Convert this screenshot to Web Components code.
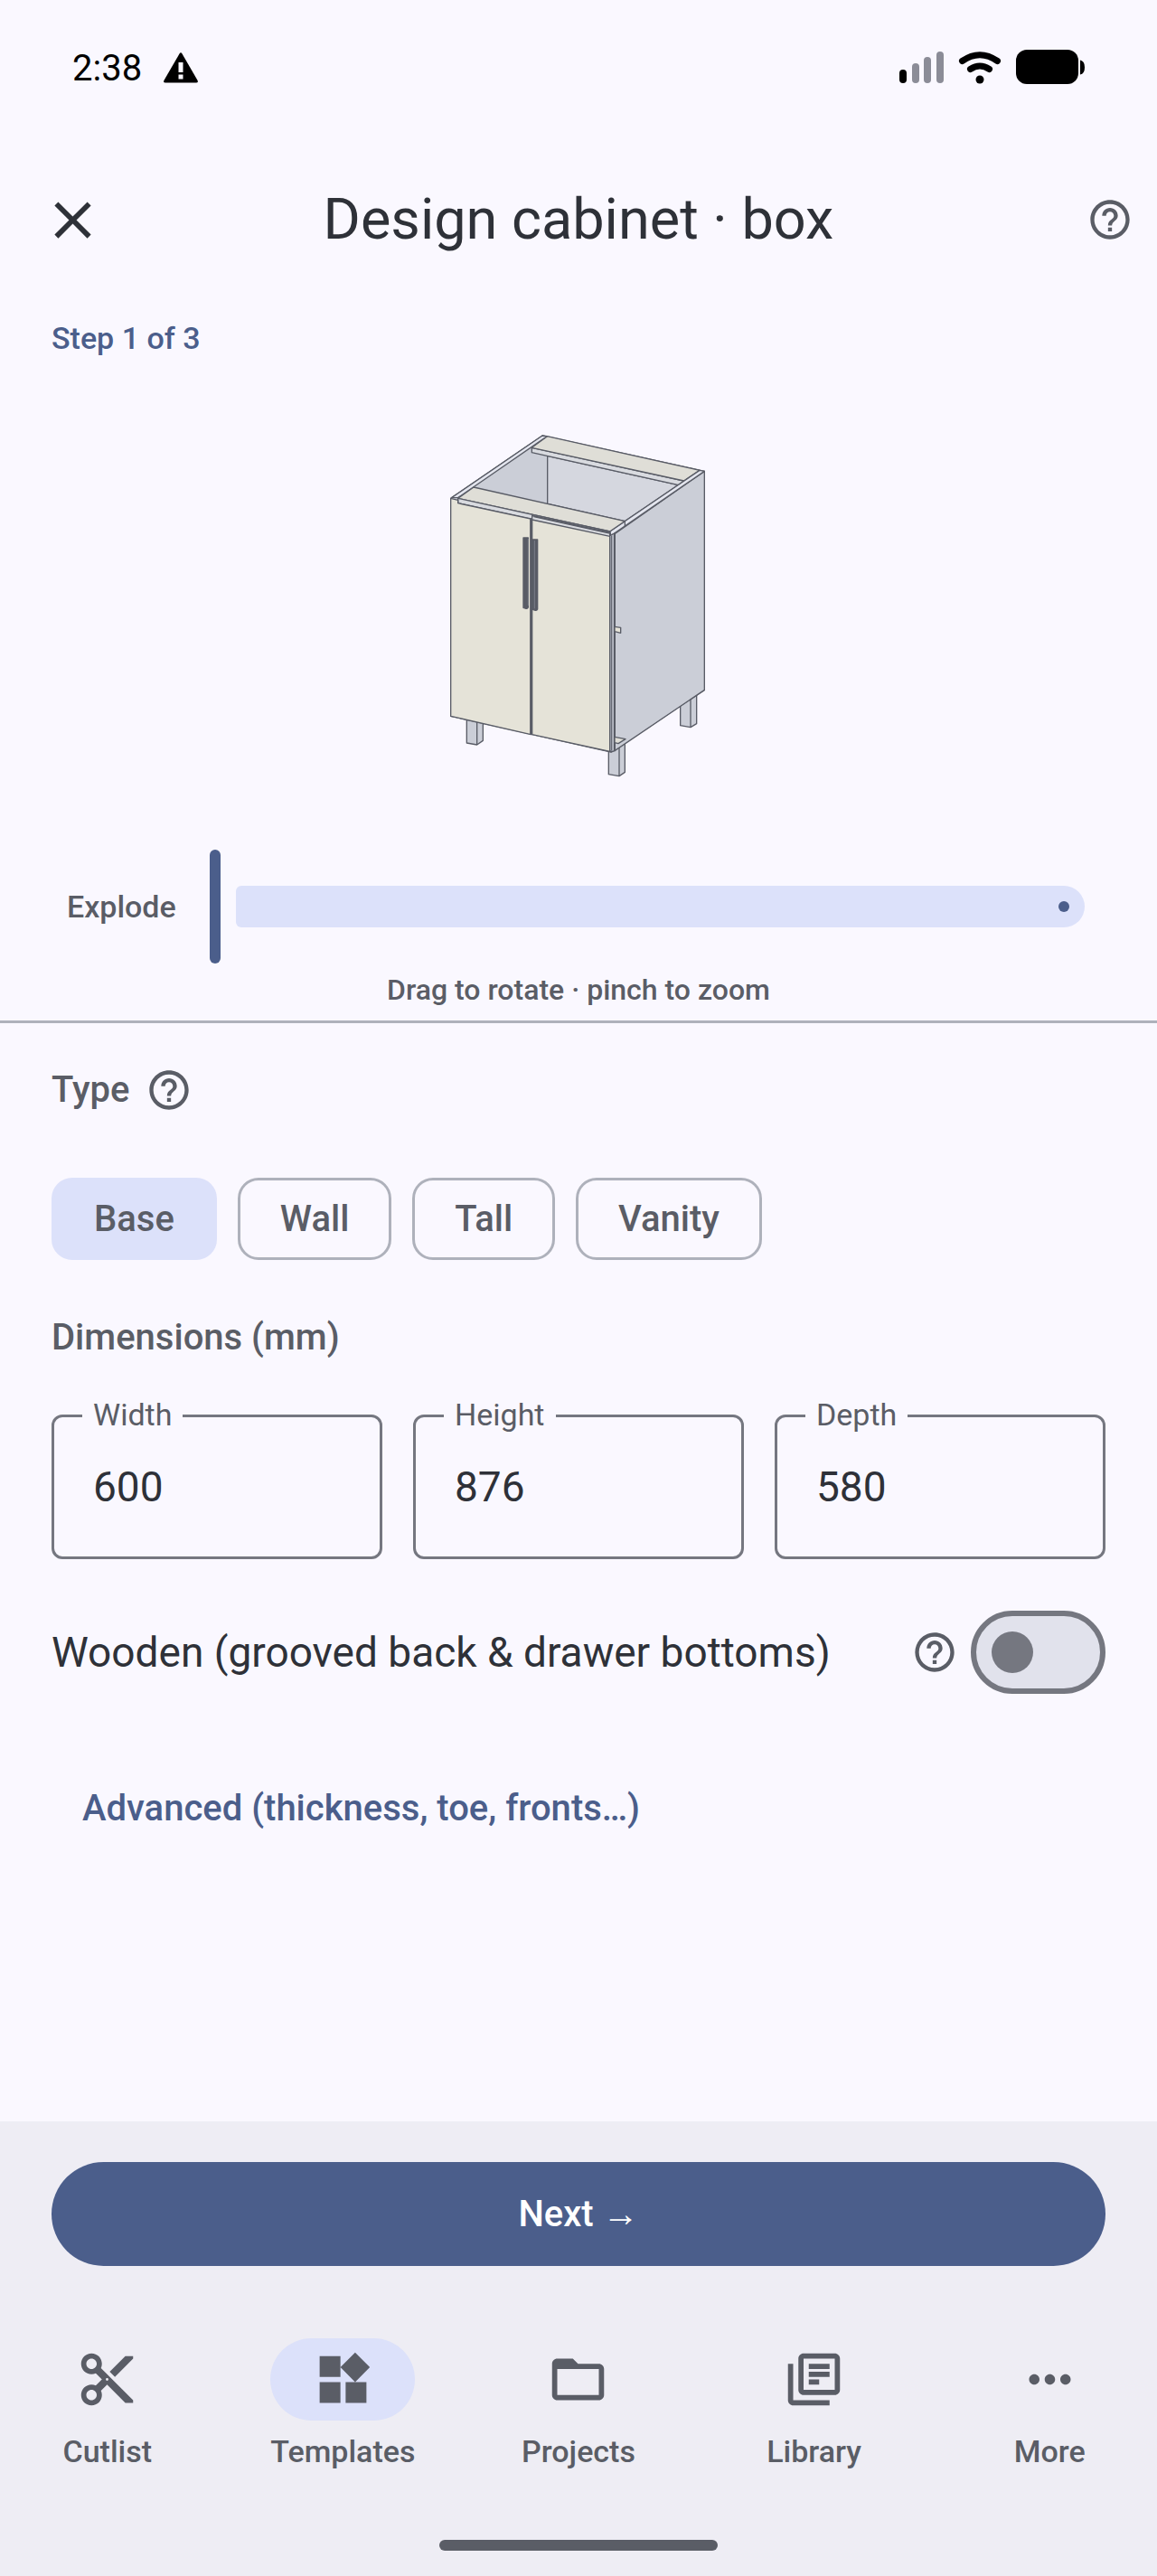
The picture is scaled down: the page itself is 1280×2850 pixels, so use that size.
<!DOCTYPE html>
<html lang="en">
<head>
<meta charset="UTF-8">
<meta name="viewport" content="width=device-width, initial-scale=1">
<title>Design cabinet</title>
<style>
    :root {
        --surface: #faf8ff;
        --surface-bar: #eeedf4;
        --primary: #4b5e8b;
        --selected: #dce1fa;
        --text: #2e3138;
        --text-soft: #5a5d66;
        --outline: #757780;
        --outline-soft: #aeb1bb;
    }
    body {
        margin: 0;
        background: var(--surface);
        color: var(--text);
        font-family: Roboto, "Liberation Sans", sans-serif;
    }
</style>
</head>
<body>
<cabinet-app></cabinet-app>

<script>
const ICONS = {
    close: '<path d="M19 6.41L17.59 5 12 10.59 6.41 5 5 6.41 10.59 12 5 17.59 6.41 19 12 13.41 17.59 19 19 17.59 13.41 12z"/>',
    help: '<path d="M11 18h2v-2h-2v2zm1-16C6.48 2 2 6.48 2 12s4.48 10 10 10 10-4.48 10-10S17.52 2 12 2zm0 18c-4.41 0-8-3.59-8-8s3.59-8 8-8 8 3.59 8 8-3.59 8-8 8zm0-14c-2.21 0-4 1.79-4 4h2c0-1.1.9-2 2-2s2 .9 2 2c0 2-3 1.75-3 5h2c0-2.25 3-2.5 3-5 0-2.21-1.79-4-4-4z"/>',
    cut: '<path d="M9.64 7.64c.23-.5.36-1.05.36-1.64 0-2.21-1.79-4-4-4S2 3.79 2 6s1.79 4 4 4c.59 0 1.14-.13 1.64-.36L10 12l-2.36 2.36C7.14 14.13 6.59 14 6 14c-2.21 0-4 1.79-4 4s1.79 4 4 4 4-1.79 4-4c0-.59-.13-1.14-.36-1.64L12 14l7 7h3v-1L9.64 7.64zM6 8c-1.1 0-2-.89-2-2s.9-2 2-2 2 .89 2 2-.9 2-2 2zm0 12c-1.1 0-2-.89-2-2s.9-2 2-2 2 .89 2 2-.9 2-2 2zm6-7.5c-.28 0-.5-.22-.5-.5s.22-.5.5-.5.5.22.5.5-.22.5-.5.5zM19 3l-6 6 2 2 7-7V3z"/>',
    widgets: '<path d="M13 13v8h8v-8h-8zM3 21h8v-8H3v8zM3 3v8h8V3H3zm13.66-1.31L11 7.34 16.66 13l5.66-5.66-5.66-5.65z"/>',
    folder: '<path d="M20 6h-8l-2-2H4c-1.1 0-1.99.9-1.99 2L2 18c0 1.1.9 2 2 2h16c1.1 0 2-.9 2-2V8c0-1.1-.9-2-2-2zm0 12H4V8h16v10z"/>',
    library: '<path d="M4 6H2v14c0 1.1.9 2 2 2h14v-2H4V6zm16-4H8c-1.1 0-2 .9-2 2v12c0 1.1.9 2 2 2h12c1.1 0 2-.9 2-2V4c0-1.1-.9-2-2-2zm0 14H8V4h12v12zM10 9h8v2h-8zm0 3h4v2h-4zm0-6h8v2h-8z"/>',
    more: '<path d="M6 10c-1.1 0-2 .9-2 2s.9 2 2 2 2-.9 2-2-.9-2-2-2zm12 0c-1.1 0-2 .9-2 2s.9 2 2 2 2-.9 2-2-.9-2-2-2zm-6 0c-1.1 0-2 .9-2 2s.9 2 2 2 2-.9 2-2-.9-2-2-2z"/>'
};

class AppIcon extends HTMLElement {
    connectedCallback() {
        this.attachShadow({ mode: 'open' });
        this.shadowRoot.innerHTML = `
            <style>
                :host { display: block; width: 69px; height: 69px; flex: none; }
                :host([small]) { width: 52px; height: 52px; }
                svg { display: block; width: 100%; height: 100%; fill: currentColor; }
            </style>
            <svg viewBox="0 0 24 24" aria-hidden="true">${ICONS[this.getAttribute('name')]}</svg>
        `;
    }
}
customElements.define('app-icon', AppIcon);

class IconButton extends HTMLElement {
    connectedCallback() {
        this.attachShadow({ mode: 'open' });
        this.shadowRoot.innerHTML = `
            <style>
                :host { display: block; flex: none; color: var(--text-soft); }
                :host([name="close"]) { color: var(--text); }
                button { display: block; padding: 0; border: 0; background: none; color: inherit; }
            </style>
            <button type="button" aria-label="${this.getAttribute('label')}">
                <app-icon name="${this.getAttribute('name')}" ${this.hasAttribute('small') ? 'small' : ''}></app-icon>
            </button>
        `;
    }
}
customElements.define('icon-button', IconButton);

class StatusBar extends HTMLElement {
    connectedCallback() {
        this.attachShadow({ mode: 'open' });
        this.shadowRoot.innerHTML = `
            <style>
                :host {
                    display: flex;
                    align-items: center;
                    height: 150px;
                    padding: 0 80px;
                    color: #000;
                    font-size: 40px;
                }
                .warning { width: 38px; height: 34px; margin-left: 24px; }
                .system { width: 206px; height: 40px; margin-left: auto; }
            </style>
            <span>2:38</span>
            <svg class="warning" viewBox="0 0 38 34" aria-hidden="true">
                <path d="M17.5 1.4q1.5-2.2 3 0L37.6 31q.8 2.6-1.6 2.6H2Q-.4 33.6.4 31z"/>
                <path d="M16.5 11h5v11h-5zM16.5 24.5h5v5h-5z" fill="#faf8ff"/>
            </svg>
            <svg class="system" viewBox="0 0 206 40" aria-hidden="true">
                <rect x="1" y="22" width="8" height="15" rx="4"/>
                <g fill="#8b8c97">
                    <rect x="15" y="15" width="8" height="22" rx="4"/>
                    <rect x="28" y="8" width="8" height="29" rx="4"/>
                    <rect x="42" y="2" width="8" height="35" rx="4"/>
                </g>
                <g fill="none" stroke="#000" stroke-width="7" stroke-linecap="round">
                    <path d="M70.5 12.5Q90 -1 109.5 12.5"/>
                    <path d="M79.5 21.5Q90 14.5 100.5 21.5"/>
                </g>
                <circle cx="90" cy="33" r="4.5"/>
                <rect x="130" y="0" width="69" height="38" rx="12"/>
                <path d="M201 11.5q5 1 5 8t-5 8z"/>
            </svg>
        `;
    }
}
customElements.define('status-bar', StatusBar);

class TitleBar extends HTMLElement {
    connectedCallback() {
        this.attachShadow({ mode: 'open' });
        this.shadowRoot.innerHTML = `
            <style>
                :host {
                    display: grid;
                    grid-template-columns: 1fr auto 1fr;
                    align-items: center;
                    height: 186px;
                    padding: 0 26px;
                }
                h1 { margin: 0; font-size: 63px; font-weight: 400; line-height: 80px; }
                .start { padding-left: 20px; }
                .end { justify-self: end; }
            </style>
            <div class="start"><slot name="start"></slot></div>
            <h1><slot></slot></h1>
            <div class="end"><slot name="end"></slot></div>
        `;
    }
}
customElements.define('title-bar', TitleBar);

// Isometric view of the base cabinet with two doors
class CabinetView extends HTMLElement {
    connectedCallback() {
        this.attachShadow({ mode: 'open' });
        this.shadowRoot.innerHTML = `
            <style>
                :host { display: grid; justify-items: center; padding: 63px 0 60px; }
                svg { display: block; width: 320px; height: 420px; }
            </style>
            <svg viewBox="0 0 960 1260" role="img" aria-label="Base cabinet preview" stroke="#595c66" stroke-width="4" stroke-linejoin="round">
                <g fill="#cbced7">
                    <path d="M109 1000V1086L143 1092L163 1078V1000z"/>
                    <path d="M143 1000V1092"/>
                    <path d="M580 1100V1190L615 1196L634 1183V1080z"/>
                    <path d="M615 1090V1196"/>
                    <path d="M818 950V1028L852 1034L872 1022V920z"/>
                    <path d="M852 930V1034"/>
                </g>
                <path d="M360 66L898 184V910L588 1116L56 997V274z" fill="#cbced7"/>
                <path d="M377 133L812 230L634 350L377 292z" fill="#d5d7df"/>
                <path d="M600 392L898 184V910L600 1112z" fill="#cbced7"/>
                <path d="M325 106L830 216L812 230L325 122z" fill="#d9dbe0"/>
                <path d="M376 68L882 181L830 216L325 106z" fill="#dfded7"/>
                <path d="M360 66L376 68L80 272L60 271z" fill="#e4e6ef"/>
                <path d="M882 181L898 184L588 398L584 384z" fill="#e4e6ef"/>
                <path d="M634 350V366" fill="none"/>
                <path d="M132 237L634 350L584 384L80 274z" fill="#dfded7"/>
                <path d="M80 274L584 384V400L80 290z" fill="#d9dbe0"/>
                <path d="M56 274L80 280V290L322 342V1058L56 997z" fill="#e5e3d8"/>
                <path d="M326 332L584 388V1114L326 1058z" fill="#e5e3d8"/>
                <path d="M326 332L584 388V400L326 345z" fill="#d9dbe0"/>
                <path d="M332 334L584 390" fill="none" stroke-width="5"/>
                <path d="M584 398L600 390V1112L588 1116L584 1110z" fill="#b5b8c2"/>
                <path d="M590 398V1112" fill="none" stroke-width="3"/>
                <path d="M600 392V1112" fill="none" stroke-width="6"/>
                <path d="M322 340V1058" fill="none" stroke-width="7"/>
                <path d="M600 700L620 703V721L600 716z" fill="#e5e3d8"/>
                <path d="M600 1066L636 1073L612 1088L600 1085z" fill="#dfded7"/>
                <path d="M297 405H313V636Q311 641 306 640L297 637z" fill="#595c66"/>
                <path d="M328 411H344V642Q342 647 337 646L328 643z" fill="#595c66"/>
                <path d="M313 408V630M334 414V640" fill="none" stroke="#8b8e99" stroke-width="2"/>
            </svg>
        `;
    }
}
customElements.define('cabinet-view', CabinetView);

class ExplodeSlider extends HTMLElement {
    connectedCallback() {
        this.attachShadow({ mode: 'open' });
        this.shadowRoot.innerHTML = `
            <style>
                :host {
                    display: flex;
                    align-items: center;
                    gap: 30px;
                    padding: 0 80px 0 74px;
                }
                label { min-width: 128px; color: var(--text-soft); font-size: 34px; font-weight: 500; line-height: 46px; }
                .slider { display: grid; flex: 1; align-items: center; }
                .slider > * { grid-area: 1 / 1; }
                .track {
                    display: flex;
                    align-items: center;
                    justify-content: flex-end;
                    height: 46px;
                    margin-left: 29px;
                    padding-right: 17px;
                    border-radius: 6px 23px 23px 6px;
                    background: var(--selected);
                }
                .track::after { content: ""; width: 12px; height: 12px; border-radius: 50%; background: var(--primary); }
                input { appearance: none; width: 100%; height: 126px; margin: 0; background: none; }
                input::-webkit-slider-thumb {
                    appearance: none;
                    width: 12px;
                    height: 126px;
                    border-radius: 6px;
                    background: var(--primary);
                }
            </style>
            <label for="explode">Explode</label>
            <div class="slider">
                <div class="track"></div>
                <input id="explode" type="range" min="0" max="100" value="0">
            </div>
        `;
    }
}
customElements.define('explode-slider', ExplodeSlider);

class FilterChip extends HTMLElement {
    connectedCallback() {
        this.attachShadow({ mode: 'open' });
        this.shadowRoot.innerHTML = `
            <style>
                :host { display: block; }
                button {
                    height: 91px;
                    padding: 0 44px;
                    border: 3px solid var(--outline-soft);
                    border-radius: 23px;
                    background: none;
                    color: var(--text-soft);
                    font: 500 40px/57px Roboto, "Liberation Sans", sans-serif;
                }
                :host([selected]) button { border-color: var(--selected); background: var(--selected); }
            </style>
            <button type="button" aria-pressed="${this.hasAttribute('selected')}"><slot></slot></button>
        `;
    }
}
customElements.define('filter-chip', FilterChip);

class DimensionField extends HTMLElement {
    connectedCallback() {
        this.attachShadow({ mode: 'open' });
        this.shadowRoot.innerHTML = `
            <style>
                :host { display: block; position: relative; flex: 1; min-width: 0; }
                label {
                    position: absolute;
                    top: -23px;
                    left: 34px;
                    padding: 0 12px;
                    background: var(--surface);
                    color: var(--text-soft);
                    font-size: 34px;
                    line-height: 46px;
                }
                input {
                    display: block;
                    box-sizing: border-box;
                    width: 100%;
                    height: 160px;
                    padding: 0 43px;
                    border: 3px solid var(--outline);
                    border-radius: 12px;
                    background: none;
                    color: var(--text);
                    font: 46px/69px Roboto, "Liberation Sans", sans-serif;
                }
            </style>
            <label for="value">${this.getAttribute('label')}</label>
            <input id="value" type="text" inputmode="numeric" value="${this.getAttribute('value')}">
        `;
    }
}
customElements.define('dimension-field', DimensionField);

class SwitchRow extends HTMLElement {
    connectedCallback() {
        this.attachShadow({ mode: 'open' });
        this.shadowRoot.innerHTML = `
            <style>
                :host { display: flex; align-items: center; }
                label { flex: 1; font-size: 46px; line-height: 69px; }
                input {
                    appearance: none;
                    display: flex;
                    align-items: center;
                    box-sizing: border-box;
                    width: 149px;
                    height: 92px;
                    margin: 0 0 0 14px;
                    padding: 0 17px;
                    border: 6px solid var(--outline);
                    border-radius: 46px;
                    background: #e1e2ec;
                }
                input::before { content: ""; width: 46px; height: 46px; border-radius: 50%; background: var(--outline); }
                input:checked { justify-content: flex-end; background: var(--selected); }
            </style>
            <label for="toggle"><slot></slot></label>
            <icon-button name="help" label="About wooden construction" small></icon-button>
            <input id="toggle" type="checkbox" role="switch">
        `;
    }
}
customElements.define('switch-row', SwitchRow);

class NavItem extends HTMLElement {
    connectedCallback() {
        this.attachShadow({ mode: 'open' });
        this.shadowRoot.innerHTML = `
            <style>
                :host { display: block; flex: 1; }
                a {
                    display: flex;
                    flex-direction: column;
                    align-items: center;
                    gap: 11px;
                    color: var(--text-soft);
                    font-size: 34px;
                    font-weight: 500;
                    line-height: 46px;
                    text-decoration: none;
                }
                .pill { display: grid; place-items: center; width: 160px; height: 91px; border-radius: 46px; }
                :host([selected]) .pill { background: var(--selected); }
            </style>
            <a href="#${this.getAttribute('icon')}">
                <span class="pill"><app-icon name="${this.getAttribute('icon')}"></app-icon></span>
                <slot></slot>
            </a>
        `;
    }
}
customElements.define('nav-item', NavItem);

class BottomPanel extends HTMLElement {
    connectedCallback() {
        this.attachShadow({ mode: 'open' });
        this.shadowRoot.innerHTML = `
            <style>
                :host { display: block; padding: 45px 0 28px; background: var(--surface-bar); }
                .next {
                    display: block;
                    width: calc(100% - 114px);
                    height: 115px;
                    margin: 0 57px 80px;
                    border: 0;
                    border-radius: 58px;
                    background: var(--primary);
                    color: #fff;
                    font: 500 40px/57px Roboto, "Liberation Sans", sans-serif;
                }
                nav { display: flex; gap: 23px; }
                .home { width: 308px; height: 12px; margin: 75px auto 0; border-radius: 6px; background: var(--text-soft); }
            </style>
            <button class="next" type="button">Next →</button>
            <nav>
                <nav-item icon="cut">Cutlist</nav-item>
                <nav-item icon="widgets" selected>Templates</nav-item>
                <nav-item icon="folder">Projects</nav-item>
                <nav-item icon="library">Library</nav-item>
                <nav-item icon="more">More</nav-item>
            </nav>
            <div class="home"></div>
        `;
    }
}
customElements.define('bottom-panel', BottomPanel);

class CabinetApp extends HTMLElement {
    connectedCallback() {
        this.attachShadow({ mode: 'open' });
        this.shadowRoot.innerHTML = `
            <style>
                :host { display: flex; flex-direction: column; min-height: 100vh; }
                .step { margin: 0; padding: 15px 57px 0; color: var(--primary); font-size: 34px; font-weight: 500; line-height: 46px; }
                .hint { margin: 6px 0 11px; color: var(--text-soft); font-size: 32px; font-weight: 500; line-height: 46px; text-align: center; }
                .preview { border-bottom: 3px solid var(--outline-soft); }
                form { display: flex; flex-direction: column; gap: 57px; padding: 45px 57px; }
                h2 { margin: 0; color: var(--text-soft); font-size: 40px; font-weight: 500; line-height: 57px; }
                .type { display: flex; align-items: center; gap: 18px; margin-bottom: 12px; }
                .chips { display: flex; flex-wrap: wrap; gap: 23px; }
                .fields { display: flex; gap: 34px; }
                .advanced {
                    align-self: flex-start;
                    height: 115px;
                    margin-top: 12px;
                    padding: 0 34px;
                    border: 0;
                    background: none;
                    color: var(--primary);
                    font: 500 40px/57px Roboto, "Liberation Sans", sans-serif;
                }
                bottom-panel { margin-top: auto; }
            </style>
            <status-bar></status-bar>
            <title-bar>
                <icon-button slot="start" name="close" label="Close"></icon-button>
                Design cabinet · box
                <icon-button slot="end" name="help" label="Help" small></icon-button>
            </title-bar>
            <section class="preview">
                <p class="step">Step 1 of 3</p>
                <cabinet-view></cabinet-view>
                <explode-slider></explode-slider>
                <p class="hint">Drag to rotate · pinch to zoom</p>
            </section>
            <form>
                <div class="type">
                    <h2>Type</h2>
                    <icon-button name="help" label="About cabinet types" small></icon-button>
                </div>
                <div class="chips">
                    <filter-chip selected>Base</filter-chip>
                    <filter-chip>Wall</filter-chip>
                    <filter-chip>Tall</filter-chip>
                    <filter-chip>Vanity</filter-chip>
                </div>
                <h2>Dimensions (mm)</h2>
                <div class="fields">
                    <dimension-field label="Width" value="600"></dimension-field>
                    <dimension-field label="Height" value="876"></dimension-field>
                    <dimension-field label="Depth" value="580"></dimension-field>
                </div>
                <switch-row>Wooden (grooved back &amp; drawer bottoms)</switch-row>
                <button class="advanced" type="button">Advanced (thickness, toe, fronts…)</button>
            </form>
            <bottom-panel></bottom-panel>
        `;
    }
}
customElements.define('cabinet-app', CabinetApp);
</script>
</body>
</html>
